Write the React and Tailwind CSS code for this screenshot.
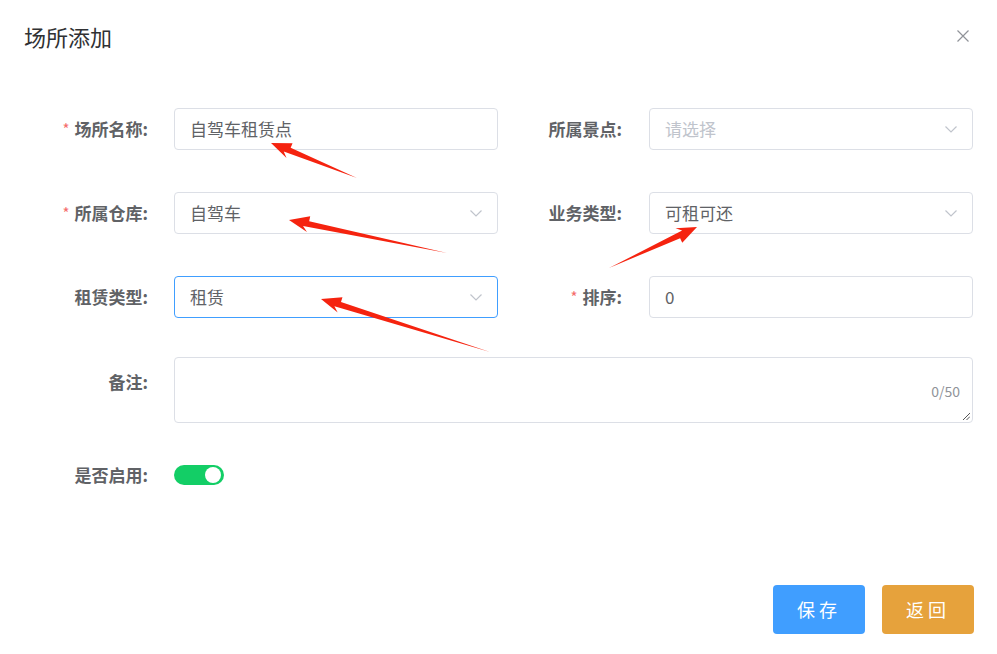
import React from 'react';

const font = { fontFamily: '"Noto Sans CJK SC", "Noto Sans", sans-serif' };

function Chevron() {
  return (
    <svg width="14" height="14" viewBox="0 0 14 14" fill="none" stroke="#c0c4cc" strokeWidth="1.2">
      <path d="M1.5 4.5 L7 10 L12.5 4.5" />
    </svg>
  );
}

function Label({ text, required, right }) {
  return (
    <div className={`flex h-[42px] items-center justify-end text-[17px] font-bold text-[#606266] ${right ? 'pr-[27px]' : 'pr-[26px]'}`}>
      {required && <span className="mr-[5px] text-[15px] font-normal text-[#f56c6c]">*</span>}
      {text}
    </div>
  );
}

function Field({ value, placeholder, select, focused }) {
  return (
    <div
      className={`flex h-[42px] items-center justify-between rounded-[4px] border pl-[15px] pr-[14px] text-[17px] ${
        focused ? 'border-[#409eff]' : 'border-[#dcdfe6]'
      }`}
    >
      <span className={value ? 'text-[#606266]' : 'text-[#c0c4cc]'}>{value || placeholder}</span>
      {select && <Chevron />}
    </div>
  );
}

function arrowPoints(tx, ty, hx, hy) {
  const dx = hx - tx;
  const dy = hy - ty;
  const len = Math.hypot(dx, dy);
  const ux = dx / len;
  const uy = dy / len;
  const px = -uy;
  const py = ux;
  const headLen = 20;
  const headW = 8;
  const shaftW = 3;
  const bx = hx - ux * headLen;
  const by = hy - uy * headLen;
  const nx = hx - ux * (headLen - 5);
  const ny = hy - uy * (headLen - 5);
  const pts = [
    [tx, ty],
    [bx + px * shaftW, by + py * shaftW],
    [bx + px * headW, by + py * headW],
    [hx, hy],
    [bx - px * headW, by - py * headW],
    [nx - px * shaftW, ny - py * shaftW],
  ];
  return pts.map((p) => p.join(',')).join(' ');
}

const arrows = [
  [357, 178, 271, 143],
  [447, 253, 289, 220],
  [609, 268, 697, 227],
  [490, 352, 321, 299],
];

export default function App() {
  return (
    <div className="relative h-[654px] w-[997px] overflow-hidden bg-white" style={font}>
      <div className="flex items-center justify-between pl-[24px] pr-[28px] pt-[21px]">
        <h2 className="text-[22px] leading-[30px] text-[#303133]">场所添加</h2>
        <svg width="12" height="12" viewBox="0 0 12 12" stroke="#909399" strokeWidth="1.2">
          <path d="M0.5 0.5 L11.5 11.5 M11.5 0.5 L0.5 11.5" />
        </svg>
      </div>

      <div className="mt-[57px] grid grid-cols-[174px_324px_151px_324px] gap-y-[42px]">
        <Label text="场所名称:" required />
        <Field value="自驾车租赁点" />
        <Label text="所属景点:" right />
        <Field placeholder="请选择" select />

        <Label text="所属仓库:" required />
        <Field value="自驾车" select />
        <Label text="业务类型:" right />
        <Field value="可租可还" select />

        <Label text="租赁类型:" />
        <Field value="租赁" select focused />
        <Label text="排序:" required right />
        <Field value="0" />
      </div>

      <div className="mt-[39px] flex">
        <div className="w-[174px] pr-[26px] pt-[4px] text-right text-[17px] font-bold leading-[42px] text-[#606266]">备注:</div>
        <div className="relative h-[66px] w-[799px] rounded-[4px] border border-[#dcdfe6]">
          <span className="absolute right-[12px] top-[23px] text-[14px] text-[#909399]">0/50</span>
          <svg className="absolute bottom-[2px] right-[2px]" width="8" height="8" viewBox="0 0 8 8" stroke="#555" strokeWidth="1">
            <path d="M1 8 L8 1 M4.5 8 L8 4.5" />
          </svg>
        </div>
      </div>

      <div className="mt-[42px] flex items-center">
        <div className="w-[174px] pr-[26px] text-right text-[17px] font-bold leading-[20px] text-[#606266]">是否启用:</div>
        <div className="relative flex h-[20px] w-[50px] items-center rounded-full bg-[#13ce66]">
          <span className="absolute right-[3px] h-[16px] w-[16px] rounded-full bg-white" />
        </div>
      </div>

      <div className="mt-[100px] flex justify-end gap-[17px] pr-[23px]">
        <button className="h-[49px] w-[92px] rounded-[4px] bg-[#409eff] text-[18px] tracking-[4px] text-white">保存</button>
        <button className="h-[49px] w-[92px] rounded-[4px] bg-[#e6a23c] text-[18px] tracking-[4px] text-white">返回</button>
      </div>

      <svg className="pointer-events-none absolute left-0 top-0" width="997" height="654">
        {arrows.map((a, i) => (
          <polygon key={i} points={arrowPoints(...a)} fill="#f5230f" />
        ))}
      </svg>
    </div>
  );
}
